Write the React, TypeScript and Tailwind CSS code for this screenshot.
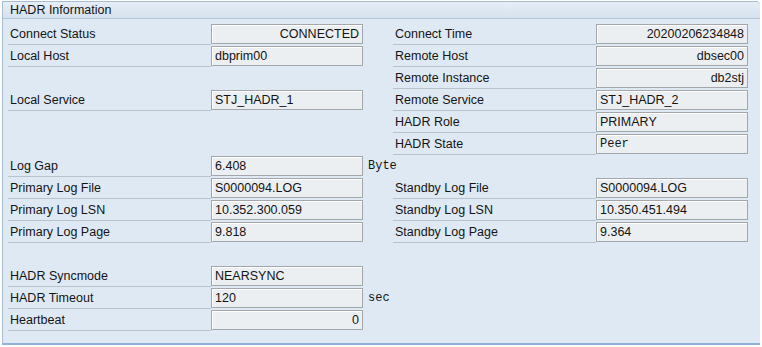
import React from "react"

type Cell = { label: string; value: string; align?: "left" | "right"; mono?: boolean; unit?: string } | null

const left: Cell[] = [
  { label: "Connect Status", value: "CONNECTED", align: "right" },
  { label: "Local Host", value: "dbprim00" },
  null,
  { label: "Local Service", value: "STJ_HADR_1" },
  null,
  null,
  { label: "Log Gap", value: "6.408", unit: "Byte" },
  { label: "Primary Log File", value: "S0000094.LOG" },
  { label: "Primary Log LSN", value: "10.352.300.059" },
  { label: "Primary Log Page", value: "9.818" },
  null,
  { label: "HADR Syncmode", value: "NEARSYNC" },
  { label: "HADR Timeout", value: "120", unit: "sec" },
  { label: "Heartbeat", value: "0", align: "right" },
]

const right: Cell[] = [
  { label: "Connect Time", value: "20200206234848", align: "right" },
  { label: "Remote Host", value: "dbsec00", align: "right" },
  { label: "Remote Instance", value: "db2stj", align: "right" },
  { label: "Remote Service", value: "STJ_HADR_2" },
  { label: "HADR Role", value: "PRIMARY" },
  { label: "HADR State", value: "Peer", mono: true },
  null,
  { label: "Standby Log File", value: "S0000094.LOG" },
  { label: "Standby Log LSN", value: "10.350.451.494" },
  { label: "Standby Log Page", value: "9.364" },
]

function Row({ cell }: { cell: Cell }) {
  if (!cell) return <div className="h-[22px]" />
  return (
    <div className="flex h-[22px] items-start">
      <div className="w-[203px] h-[22px] shrink-0 border-b border-[#b9c3cc] pl-[2px] leading-[22px]">
        {cell.label}
      </div>
      <div
        className={`mt-px h-[20px] w-[152px] shrink-0 border border-[#a3a7ab] bg-[#eceff2] shadow-[inset_1px_1px_0_#ffffff] leading-[19px] ${
          cell.align === "right" ? "text-right pr-[3px]" : "pl-[3px]"
        } ${cell.mono ? "font-['Liberation_Mono',monospace] text-[12px]" : ""}`}
      >
        {cell.value}
      </div>
      {cell.unit && (
        <div className="ml-[5px] shrink-0 leading-[22px] font-['Liberation_Mono',monospace] text-[12px]">
          {cell.unit}
        </div>
      )}
    </div>
  )
}

export default function App() {
  return (
    <div className="w-[762px] h-[347px] bg-white pt-px pl-[2px] text-[12.5px] text-[#141414] font-['Liberation_Sans',Arial,sans-serif]">
      <div className="w-[758px] h-[344px] rounded-tr-[4px] border-l border-t border-[#a9bdd2] border-b-2 border-b-[#8fb3d8] bg-[#dfe9f4]">
        <div className="h-[17px] rounded-tr-[4px] border-b border-[#b3c6da] bg-gradient-to-b from-[#e6eef7] to-[#d5e2ef] pl-[7px] leading-[16px]">
          HADR Information
        </div>
        <div className="mt-[4px] flex pl-[5px]">
          <div className="flex w-[385px] shrink-0 flex-col">
            {left.map((c, i) => (
              <Row key={i} cell={c} />
            ))}
          </div>
          <div className="flex flex-col">
            {right.map((c, i) => (
              <Row key={i} cell={c} />
            ))}
          </div>
        </div>
      </div>
    </div>
  )
}
